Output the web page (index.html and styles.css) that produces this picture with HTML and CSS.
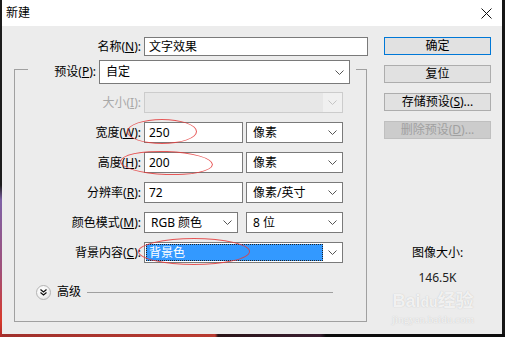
FILE: index.html
```html
<!DOCTYPE html>
<html lang="zh-CN">
<head>
    <meta charset="UTF-8">
    <title>新建</title>
    <link rel="stylesheet" href="styles.css">
</head>
<body>
    <div class="window">
        <!-- Title bar -->
        <div class="titlebar">
            <span>新建</span>
            <svg class="close" width="11" height="11" viewBox="0 0 11 11">
                <path d="M0.5 0.5 L10.5 10.5 M10.5 0.5 L0.5 10.5" stroke="#111" stroke-width="1" fill="none"/>
            </svg>
        </div>

        <div class="content">
            <!-- Left side: fields -->
            <div class="main">
                <div class="row name-row">
                    <label class="lbl">名称(<u>N</u>):</label>
                    <div class="field name-field">文字效果</div>
                </div>

                <div class="group">
                    <div class="preset-row">
                        <label class="lbl">预设(<u>P</u>):</label>
                        <div class="field select preset-field">
                            <span class="val">自定</span>
                            <span class="arrow"><svg width="9" height="5" viewBox="0 0 9 5"><path d="M0.5 0.5 L4.5 4.5 L8.5 0.5" fill="none" stroke="#555"/></svg></span>
                        </div>
                    </div>

                    <div class="row first disabled">
                        <label class="lbl">大小(<u>I</u>):</label>
                        <div class="field select wide">
                            <span class="val"></span>
                            <span class="arrow"><svg width="9" height="5" viewBox="0 0 9 5"><path d="M0.5 0.5 L4.5 4.5 L8.5 0.5" fill="none" stroke="#c4c4c4"/></svg></span>
                        </div>
                    </div>

                    <div class="row">
                        <label class="lbl">宽度(<u>W</u>):</label>
                        <div class="field num">250</div>
                        <div class="field select unit">
                            <span class="val">像素</span>
                            <span class="arrow"><svg width="9" height="5" viewBox="0 0 9 5"><path d="M0.5 0.5 L4.5 4.5 L8.5 0.5" fill="none" stroke="#555"/></svg></span>
                        </div>
                    </div>

                    <div class="row">
                        <label class="lbl">高度(<u>H</u>):</label>
                        <div class="field num">200</div>
                        <div class="field select unit">
                            <span class="val">像素</span>
                            <span class="arrow"><svg width="9" height="5" viewBox="0 0 9 5"><path d="M0.5 0.5 L4.5 4.5 L8.5 0.5" fill="none" stroke="#555"/></svg></span>
                        </div>
                    </div>

                    <div class="row">
                        <label class="lbl">分辨率(<u>R</u>):</label>
                        <div class="field num">72</div>
                        <div class="field select unit">
                            <span class="val">像素/英寸</span>
                            <span class="arrow"><svg width="9" height="5" viewBox="0 0 9 5"><path d="M0.5 0.5 L4.5 4.5 L8.5 0.5" fill="none" stroke="#555"/></svg></span>
                        </div>
                    </div>

                    <div class="row">
                        <label class="lbl">颜色模式(<u>M</u>):</label>
                        <div class="field select mode">
                            <span class="val">RGB 颜色</span>
                            <span class="arrow"><svg width="9" height="5" viewBox="0 0 9 5"><path d="M0.5 0.5 L4.5 4.5 L8.5 0.5" fill="none" stroke="#555"/></svg></span>
                        </div>
                        <div class="field select unit">
                            <span class="val">8 位</span>
                            <span class="arrow"><svg width="9" height="5" viewBox="0 0 9 5"><path d="M0.5 0.5 L4.5 4.5 L8.5 0.5" fill="none" stroke="#555"/></svg></span>
                        </div>
                    </div>

                    <div class="row">
                        <label class="lbl">背景内容(<u>C</u>):</label>
                        <div class="field select wide focus">
                            <span class="val">背景色</span>
                            <span class="arrow"><svg width="9" height="5" viewBox="0 0 9 5"><path d="M0.5 0.5 L4.5 4.5 L8.5 0.5" fill="none" stroke="#555"/></svg></span>
                        </div>
                    </div>

                    <div class="advanced">
                        <span class="expander">
                            <svg width="7" height="7" viewBox="0 0 7 7"><path d="M0.5 0.5 L3.5 3 L6.5 0.5 M0.5 3.5 L3.5 6 L6.5 3.5" fill="none" stroke="#111" stroke-width="1.2"/></svg>
                        </span>
                        <span class="adv-label">高级</span>
                        <span class="adv-line"></span>
                    </div>
                </div>
            </div>

            <!-- Right side: buttons -->
            <div class="side">
                <div class="btn default">确定</div>
                <div class="btn">复位</div>
                <div class="btn">存储预设(<u>S</u>)...</div>
                <div class="btn disabled">删除预设(<u>D</u>)...</div>

                <div class="image-size">
                    <div>图像大小:</div>
                    <div class="size-value">146.5K</div>
                </div>
            </div>
        </div>

        <!-- red annotation circles -->
        <span class="mark mark-width"></span>
        <span class="mark mark-height"></span>
        <span class="mark mark-bg"></span>

        <!-- watermark -->
        <div class="watermark">
            <div class="wm-logo">Bai<span class="wm-du">du</span>经验</div>
            <div class="wm-url">jingyan.baidu.com</div>
        </div>
    </div>
</body>
</html>
```

FILE: styles.css
```css
* {
    box-sizing: border-box;
}

body {
    margin: 0;
    width: 505px;
    height: 337px;
    overflow: hidden;
    font-family: "Noto Sans", "Noto Sans CJK SC", sans-serif;
    font-size: 12px;
    line-height: 16px;
    color: #000;
    /* desktop behind the dialog: left strip, bottom strip, dark base */
    background:
        linear-gradient(to bottom, #1c1c1c 0, #1c1c1c 185px, #7e62a6 200px, #a0507a 270px, #d83a2c 320px, #b02a2a 337px) left top / 2px 100% no-repeat,
        linear-gradient(to right, #a0302c 0, #b83a30 215px, #2a1418 218px, #3a1e30 320px, #0c0c0c 326px) left bottom / 100% 3px no-repeat,
        #161616;
}

.window {
    position: relative;
    margin-left: 2px;
    width: 500px;
    height: 334px;
    background: #ececec;
}

.titlebar {
    height: 26px;
    background: #fff;
    display: flex;
    align-items: center;
    justify-content: space-between;
    padding: 0 10px 0 4px;
}

.close {
    display: block;
}

.content {
    display: flex;
    padding-top: 11px;
}

.main {
    width: 368px;
}

.row {
    display: flex;
    align-items: center;
    height: 21px;
}

.lbl {
    text-align: right;
    white-space: nowrap;
}

.field {
    height: 100%;
    border: 1px solid #7a7a7a;
    background: #fff;
    display: flex;
    align-items: center;
    padding-left: 4px;
    white-space: nowrap;
}

.name-row {
    height: 19px;
}

.name-row .lbl {
    width: 139px;
    margin-right: 3px;
}

.name-field {
    width: 224px;
}

/* group box */
.group {
    margin: 13px 0 0 12px;
    width: 353px;
    height: 253px;
    border: 1px solid #a0a0a0;
}

.preset-row {
    display: flex;
    align-items: center;
    height: 24px;
    margin: -10px 10px 0 13px;
    padding-right: 6px;
    background: #ececec;
}

.preset-row .lbl {
    flex: 1;
    margin-right: 3px;
}

.preset-field {
    width: 251px;
}

.group .row {
    margin-top: 9px;
}

.group .row.first {
    margin-top: 8px;
}

.group .row .lbl {
    width: 126px;
    margin-right: 3px;
}

.select {
    padding: 0;
}

.select .val {
    flex: 1;
    align-self: stretch;
    display: flex;
    align-items: center;
    padding-left: 6px;
}

.select .arrow {
    width: 19px;
    display: flex;
    align-items: center;
    justify-content: center;
}

.select .arrow svg {
    display: block;
}

.wide {
    width: 199px;
}

.num {
    width: 99px;
    margin-right: 3px;
}

.unit {
    width: 97px;
}

.mode {
    width: 94px;
    margin-right: 8px;
}

.disabled .lbl {
    color: #a8a8a8;
}

.disabled .field {
    border-color: #cccccc;
    background: #f0f0f0;
}

.disabled .field .val {
    background: #e7e7e7;
}

.focus .val {
    margin: 1px 0 1px 1px;
    padding-left: 3px;
    background: #3399ff;
    color: #fff;
    outline: 1px dotted #222;
    outline-offset: -1px;
}

/* advanced toggle */
.advanced {
    display: flex;
    align-items: center;
    height: 16px;
    margin: 21px 33px 0 21px;
}

.expander {
    width: 15px;
    height: 15px;
    border-radius: 50%;
    border: 1px solid #b4b4b4;
    background: radial-gradient(circle at 40% 35%, #ffffff 0, #f4f4f4 50%, #d8d8d8 100%);
    display: flex;
    align-items: center;
    justify-content: center;
}

.expander svg {
    display: block;
}

.adv-label {
    margin-left: 6px;
}

.adv-line {
    flex: 1;
    height: 1px;
    margin-left: 6px;
    background: #a0a0a0;
}

/* buttons */
.side {
    margin-left: 14px;
    width: 107px;
}

.btn {
    height: 18px;
    margin-bottom: 10px;
    border: 1px solid #adadad;
    background: #e1e1e1;
    text-align: center;
    line-height: 16px;
    white-space: nowrap;
}

.btn.default {
    border-color: #0078d7;
}

.btn.disabled {
    background: #cccccc;
    border-color: #bfbfbf;
    color: #a0a0a0;
}

.image-size {
    margin-top: 106px;
    text-align: center;
}

.size-value {
    margin-top: 9px;
    color: #222;
}

/* annotations */
.mark {
    position: absolute;
    border: 1px solid rgba(228, 60, 60, 0.85);
    border-radius: 50%;
}

.mark-width {
    left: 125px;
    top: 119px;
    width: 70px;
    height: 25px;
}

.mark-height {
    left: 118px;
    top: 151px;
    width: 93px;
    height: 24px;
    transform: rotate(2deg);
}

.mark-bg {
    left: 136px;
    top: 238px;
    width: 112px;
    height: 27px;
}

/* watermark */
.watermark {
    position: absolute;
    left: 383px;
    top: 290px;
    width: 96px;
    text-align: center;
    color: rgba(255, 255, 255, 0.8);
    text-shadow: 0 0 1px rgba(140, 140, 140, 0.5);
}

.wm-logo {
    font-family: "Liberation Sans", "Noto Sans CJK SC", sans-serif;
    font-size: 18px;
    line-height: 22px;
    font-weight: bold;
}

.wm-du {
    font-size: 14px;
}

.wm-url {
    font-family: "Liberation Serif", serif;
    font-size: 11px;
    line-height: 12px;
}
```
